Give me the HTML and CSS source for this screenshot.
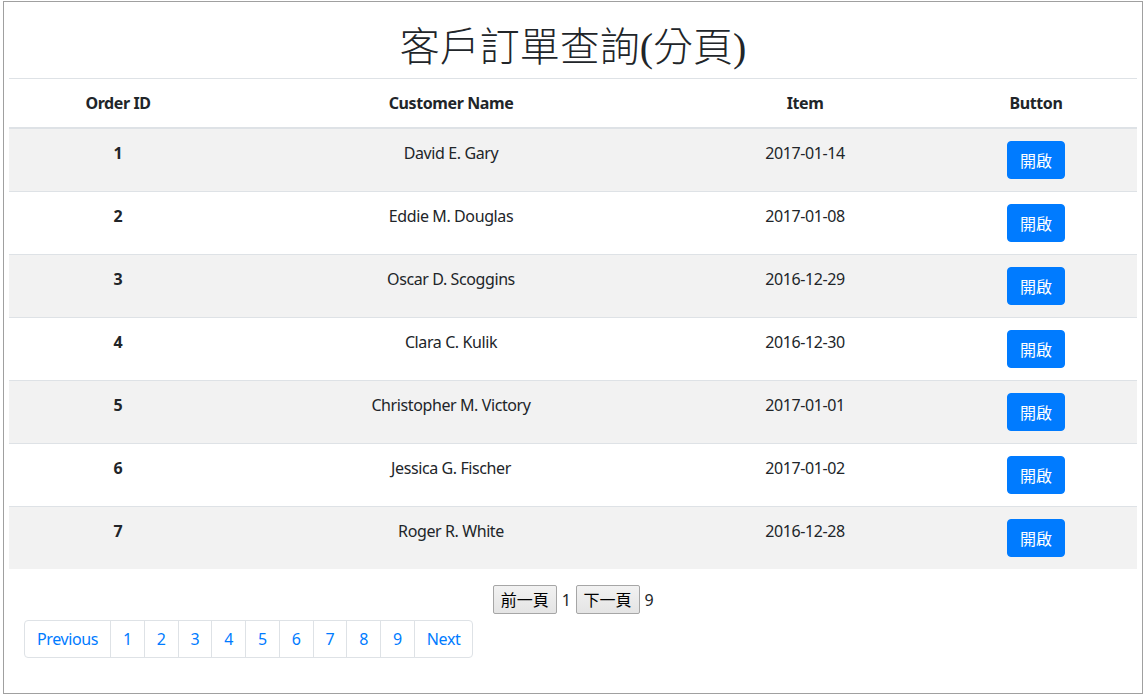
FILE: index.html
```html
<!DOCTYPE html>
<html lang="zh-Hant">
<head>
<meta charset="utf-8">
<title>客戶訂單查詢(分頁)</title>
<link rel="stylesheet" href="styles.css">
</head>
<body>
<div class="frame">
  <h1 class="title">客戶訂單查詢(分頁)</h1>
  <table class="orders">
    <colgroup>
      <col class="col-id">
      <col class="col-name">
      <col class="col-item">
      <col class="col-btn">
    </colgroup>
    <thead>
      <tr><th>Order ID</th><th>Customer Name</th><th>Item</th><th>Button</th></tr>
    </thead>
    <tbody>
      <tr><th>1</th><td>David E. Gary</td><td>2017-01-14</td><td><button class="btn">開啟</button></td></tr>
      <tr><th>2</th><td>Eddie M. Douglas</td><td>2017-01-08</td><td><button class="btn">開啟</button></td></tr>
      <tr><th>3</th><td>Oscar D. Scoggins</td><td>2016-12-29</td><td><button class="btn">開啟</button></td></tr>
      <tr><th>4</th><td>Clara C. Kulik</td><td>2016-12-30</td><td><button class="btn">開啟</button></td></tr>
      <tr><th>5</th><td>Christopher M. Victory</td><td>2017-01-01</td><td><button class="btn">開啟</button></td></tr>
      <tr><th>6</th><td>Jessica G. Fischer</td><td>2017-01-02</td><td><button class="btn">開啟</button></td></tr>
      <tr><th>7</th><td>Roger R. White</td><td>2016-12-28</td><td><button class="btn">開啟</button></td></tr>
    </tbody>
  </table>
  <div class="pager">
    <button class="old-btn">前一頁</button>
    <span class="pnum">1</span>
    <button class="old-btn">下一頁</button>
    <span class="pnum">9</span>
  </div>
  <ul class="pagination">
    <li><a href="#" class="first">Previous</a></li>
    <li><a href="#">1</a></li>
    <li><a href="#">2</a></li>
    <li><a href="#">3</a></li>
    <li><a href="#">4</a></li>
    <li><a href="#">5</a></li>
    <li><a href="#">6</a></li>
    <li><a href="#">7</a></li>
    <li><a href="#">8</a></li>
    <li><a href="#">9</a></li>
    <li><a href="#" class="last">Next</a></li>
  </ul>
</div>
</body>
</html>
```

FILE: styles.css
```css
* { box-sizing: border-box; }

html, body {
  margin: 0;
  padding: 0;
  background: #fff;
}

body {
  font-family: "Noto Sans", "Noto Sans CJK TC", sans-serif;
  font-size: 16px;
  line-height: 24px;
  color: #212529;
  letter-spacing: -0.4px;
}

.frame {
  width: 1140px;
  height: 693px;
  margin: 1px 0 0 3px;
  border: 1px solid #a0a0a0;
  padding: 0 5px;
}

.title {
  margin: 22px 0 6px;
  font-family: "Liberation Serif", "Noto Sans CJK TC", serif;
  font-size: 40px;
  font-weight: 300;
  line-height: 48px;
  text-align: center;
  letter-spacing: 0;
  color: #212529;
}

.orders {
  width: 1128px;
  table-layout: fixed;
  border-collapse: separate;
  border-spacing: 0;
  margin-bottom: 16px;
}

.col-id { width: 218px; }
.col-name { width: 448px; }
.col-item { width: 260px; }
.col-btn { width: 202px; }

.orders th,
.orders td {
  padding: 12px;
  text-align: center;
  vertical-align: top;
  line-height: 24px;
}

.orders thead th {
  font-weight: 700;
  border-top: 1px solid #dee2e6;
  border-bottom: 2px solid #dee2e6;
}

.orders tbody th {
  font-weight: 700;
}

.orders tbody tr:nth-child(odd) th,
.orders tbody tr:nth-child(odd) td {
  background: #f2f2f2;
}

.orders tbody tr:not(:last-child) th,
.orders tbody tr:not(:last-child) td {
  border-bottom: 1px solid #dee2e6;
}

.btn {
  display: inline-block;
  height: 38px;
  padding: 6px 12px;
  border: 1px solid #007bff;
  border-radius: 4px;
  background: #007bff;
  color: #fff;
  font-family: "Noto Sans CJK TC", sans-serif;
  font-size: 16px;
  line-height: 24px;
  letter-spacing: 0;
  cursor: pointer;
}

.pager {
  display: flex;
  justify-content: center;
  align-items: center;
  gap: 5px;
  height: 29px;
}

.old-btn {
  height: 29px;
  width: 64px;
  padding: 0;
  border: 1px solid #a6a6a6;
  border-radius: 2px;
  background: linear-gradient(#f2f2f2, #e4e4e4);
  color: #000;
  font-family: "Noto Sans CJK TC", sans-serif;
  font-size: 16px;
  line-height: 27px;
  letter-spacing: 0;
}

.pnum {
  line-height: 24px;
}

.pagination {
  display: flex;
  list-style: none;
  margin: 6px 0 16px 15px;
  padding: 0;
}

.pagination li {
  margin-left: -1px;
}

.pagination li:first-child {
  margin-left: 0;
}

.pagination a {
  display: block;
  padding: 8px 12px;
  line-height: 20px;
  color: #007bff;
  text-decoration: none;
  background: #fff;
  border: 1px solid #dee2e6;
}

.pagination a.first {
  border-radius: 4px 0 0 4px;
}

.pagination a.last {
  border-radius: 0 4px 4px 0;
}
```
